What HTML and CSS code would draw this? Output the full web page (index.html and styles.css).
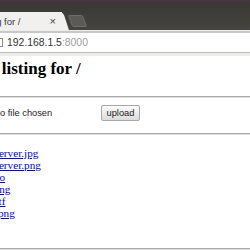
FILE: index.html
```html
<!DOCTYPE html>
<html lang="en">
  <head>
    <meta charset="UTF-8" />
    <meta name="viewport" content="width=device-width, initial-scale=1.0" />
    <title>Directory listing for /</title>
    <link rel="stylesheet" href="styles.css">
  </head>
  <body>
    <div class="browser">
      <div class="tabstrip">
        <div class="tab">
          <span class="tab-title">Directory listing for /</span>
          <span class="tab-close">×</span>
        </div>
        <div class="newtab"></div>
      </div>

      <div class="toolbar">
        <div class="omnibox">
          <span class="page-icon"></span>
          <span class="host">192.168.1.5</span><span class="port">:8000</span>
        </div>
      </div>

      <div class="viewport">
        <div class="page">
          <h2>Directory listing for /</h2>
          <hr />
          <form class="upload">
            <span class="file-pick">
              <span class="choose">Choose File</span>
              <span class="file-name">No file chosen</span>
            </span>
            <button type="button">upload</button>
          </form>
          <hr />
          <ul>
            <li><a href="#">Upload_server.jpg</a></li>
            <li><a href="#">Upload_server.png</a></li>
            <li><a href="#">web_video</a></li>
            <li><a href="#">desktop.png</a></li>
            <li><a href="#">changes.rtf</a></li>
            <li><a href="#">snapshot.png</a></li>
          </ul>
          <hr />
        </div>
      </div>
    </div>
  </body>
</html>
```

FILE: styles.css
```css
body {
  margin: 0;
  width: 250px;
  height: 250px;
  overflow: hidden;
}

.browser {
  display: flex;
  flex-direction: column;
  height: 250px;
}

/* tab strip (dark ubuntu title area) */
.tabstrip {
  height: 28px;
  border-top: 2px solid #4a3342;
  background: linear-gradient(#393834, #45443f);
  display: flex;
  align-items: flex-end;
}

.tab {
  position: relative;
  display: flex;
  align-items: center;
  flex-shrink: 0;
  height: 18px;
  width: 129px;
  margin-left: -67px;
  padding-left: 3.5px;
  box-sizing: border-box;
  background: #f1f0ef;
  border-top-left-radius: 4px;
  font-family: "Liberation Sans", Arial, sans-serif;
  font-size: 9.5px;
  color: #3a3a3a;
}

.tab::after {
  content: "";
  position: absolute;
  right: -4px;
  top: 0;
  width: 9px;
  height: 18px;
  background: #f1f0ef;
  border-top-right-radius: 4px;
  transform: skewX(18deg);
}

.tab-title {
  flex: 1;
  white-space: nowrap;
  overflow: hidden;
}

.tab-close {
  font-size: 11px;
  color: #444;
  margin-right: 6px;
  position: relative;
  z-index: 1;
}

.newtab {
  width: 13px;
  height: 10px;
  margin: 0 0 3px 8px;
  background: #5b5a56;
  border: 1px solid #6e6d68;
  border-radius: 2px;
  transform: skewX(20deg);
}

/* address bar */
.toolbar {
  background: #ececeb;
  padding: 1px 0 3px;
}

.omnibox {
  display: flex;
  align-items: center;
  height: 19px;
  background: #fff;
  border-top: 2px solid #c8c8c8;
  border-bottom: 1px solid #bcbcbc;
  font-family: "Liberation Sans", Arial, sans-serif;
  font-size: 10.4px;
}

.page-icon {
  width: 6px;
  height: 7px;
  margin-left: -5px;
  margin-right: 4px;
  border: 1px solid #8c8c8c;
}

.host {
  color: #333;
}

.port {
  color: #a0a0a0;
}

/* page content, zoomed out browser */
.viewport {
  flex: 1;
  overflow: hidden;
  background: #fff;
}

.page {
  margin-left: -72px;
  padding-top: 2.5px;
  font-family: "Liberation Serif", "Times New Roman", serif;
}

h2 {
  font-size: 17px;
  margin: 0 0 17px;
}

hr {
  height: 0;
  margin: 0;
  border: none;
  border-top: 1px solid #a9a9a9;
  border-bottom: 1px solid #dedede;
}

.upload {
  display: flex;
  align-items: center;
  padding: 7px 0 12px;
  font-family: "Liberation Sans", Arial, sans-serif;
  font-size: 9.3px;
  color: #222;
}

.file-pick {
  display: flex;
  align-items: center;
  width: 170px;
}

.choose {
  width: 61px;
  margin-right: 4.3px;
}

.upload button {
  width: 39px;
  height: 16px;
  margin-left: 3px;
  padding: 0;
  font-family: "Liberation Sans", Arial, sans-serif;
  font-size: 9.3px;
  color: #222;
  background: linear-gradient(#fbfbfb, #dcdcdc);
  border: 1px solid #a8a8a8;
  border-radius: 2px;
}

ul {
  margin: 12.5px 0 29px;
  padding-left: 28px;
  font-size: 11.2px;
}

a {
  color: #0000ee;
}
```
